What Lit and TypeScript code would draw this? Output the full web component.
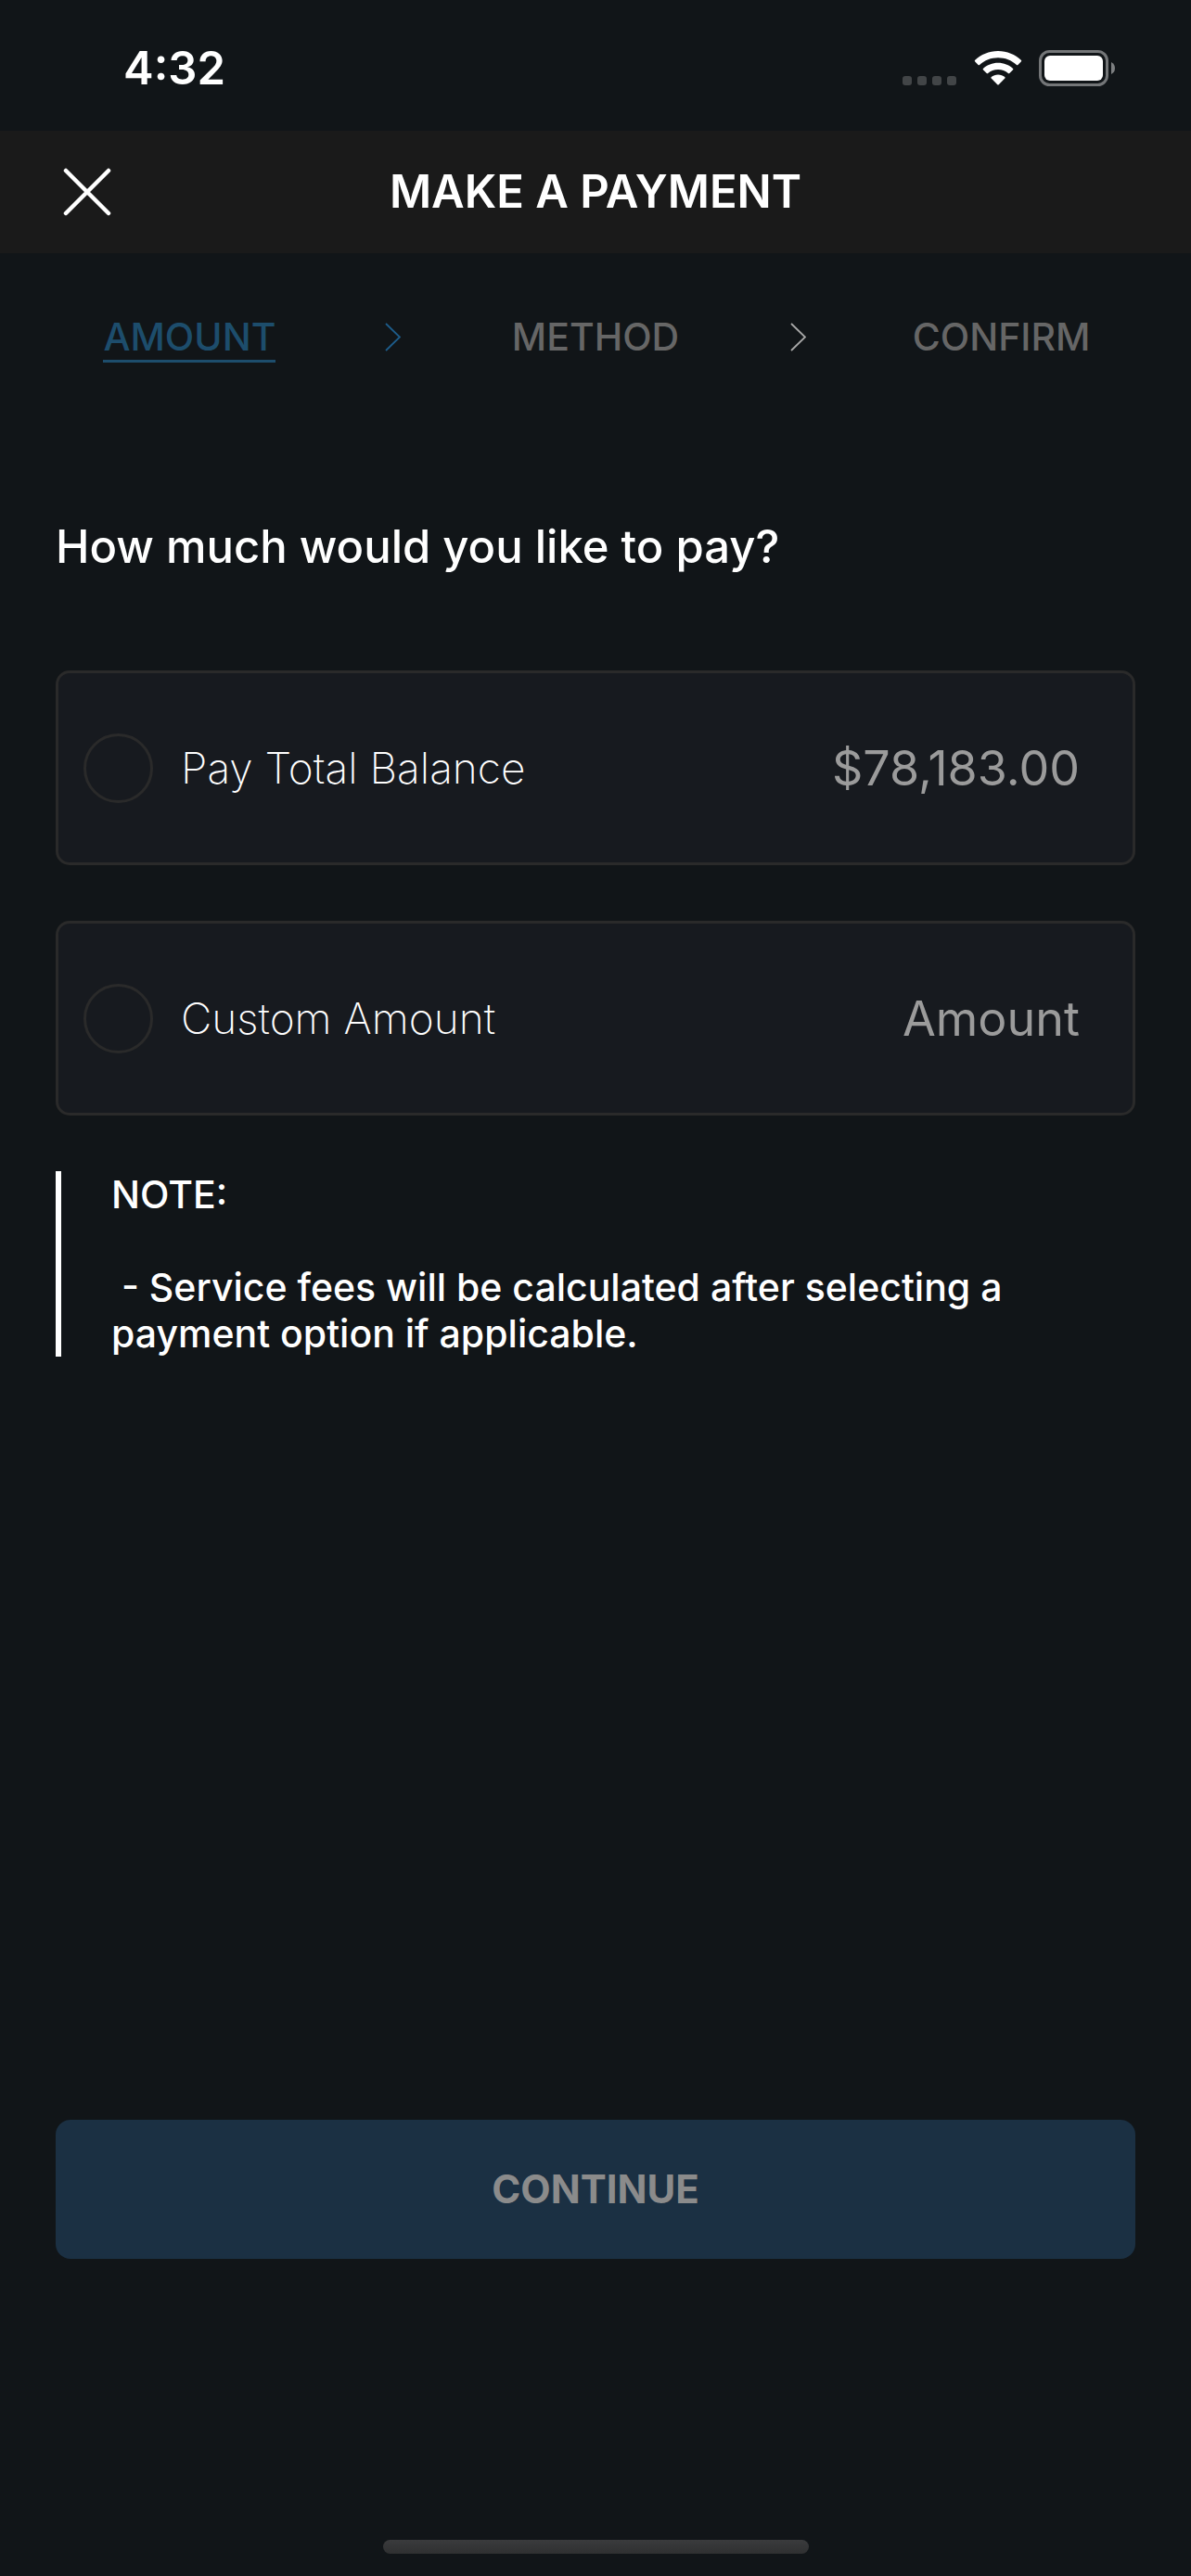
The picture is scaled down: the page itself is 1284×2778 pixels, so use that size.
import { LitElement, html, css, svg } from "lit";
import { customElement, state } from "lit/decorators.js";

type Choice = "" | "total" | "custom";

const STEPS = ["AMOUNT", "METHOD", "CONFIRM"];

@customElement("status-bar")
class StatusBar extends LitElement {
  static styles = css`
    :host {
      display: flex;
      align-items: center;
      justify-content: space-between;
      height: 141px;
      padding: 6px 82px 0 133px;
      box-sizing: border-box;
    }
    .time {
      font-size: 49px;
      line-height: 60px;
      font-weight: 600;
    }
    .icons {
      display: flex;
      align-items: flex-end;
    }
    .signal {
      width: 58px;
      height: 39px;
      margin-right: 19px;
    }
    .wifi {
      width: 52px;
      height: 39px;
      margin-right: 18px;
    }
    .battery {
      width: 82px;
      height: 39px;
    }
  `;

  render() {
    return html`
      <span class="time">4:32</span>
      <div class="icons">
        <svg class="signal" viewBox="0 0 58 39" aria-hidden="true" fill="#424547">
          ${[0, 16, 32, 48].map((x) => svg`<rect x=${x} y="28" width="10" height="10" rx="3" />`)}
        </svg>
        <svg class="wifi" viewBox="0 0 52 39" aria-hidden="true" fill="#fff">
          <path d="M26 1C35.600 1 44.500 4.700 51 11Q51.500 11.700 51 12.300L47.400 16Q46.700 16.600 46 16C40.500 11 33.500 8.300 26 8.300S11.500 11 6 16Q5.300 16.600 4.600 16L1 12.300Q.5 11.700 1 11C7.500 4.700 16.400 1 26 1Z" />
          <path d="M26 13.700C32.200 13.700 37.800 16 42.100 19.900Q42.700 20.500 42.100 21.200L38.300 25Q37.600 25.600 36.900 25C34 22.500 30.200 21 26 21S18 22.500 15.100 25Q14.400 25.600 13.700 25L9.900 21.200Q9.300 20.500 9.900 19.900C14.200 16 19.800 13.700 26 13.700Z" />
          <path d="M26 26.500C28.800 26.500 31.300 27.400 33.300 29.100Q33.900 29.800 33.300 30.500L26.700 37.200Q26 37.800 25.300 37.200L18.700 30.500Q18.100 29.800 18.700 29.100C20.700 27.400 23.200 26.500 26 26.500Z" />
        </svg>
        <svg class="battery" viewBox="0 0 82 39" aria-hidden="true">
          <rect x="1.500" y="1.500" width="72" height="36" rx="10" fill="none" stroke="#747678" stroke-width="3" />
          <rect x="6" y="6" width="63" height="27" rx="6" fill="#fff" />
          <path d="M78 13Q82 15 82 19.500T78 26Z" fill="#7d7f81" />
        </svg>
      </div>
    `;
  }
}

@customElement("step-trail")
class StepTrail extends LitElement {
  static styles = css`
    :host {
      display: block;
      padding: 65px 95px 0;
    }
    .trail {
      display: grid;
      grid-template-columns: repeat(5, 1fr);
      justify-items: center;
      align-items: start;
      margin: 0;
      padding: 0;
      list-style: none;
      color: #666;
      font-size: 41px;
      line-height: 50px;
      font-weight: 500;
    }
    .step {
      border-bottom: 3px solid transparent;
    }
    .current {
      color: #1d4d6c;
      border-color: #1d4d6c;
    }
    .divider {
      display: flex;
      align-items: center;
      height: 50px;
      color: #a8a8a8;
    }
    .passed {
      color: #1d5c8a;
    }
    .chevron {
      width: 17px;
      height: 31px;
    }
  `;

  render() {
    return html`
      <ol class="trail">
        ${STEPS.map(
          (name, i) => html`
            ${i > 0
              ? html`<li class="divider ${i === 1 ? "passed" : ""}" aria-hidden="true">
                  <svg class="chevron" viewBox="0 0 17 31" fill="none" stroke="currentColor" stroke-width="1.800">
                    <path d="M1 1L16 15.500L1 30" />
                  </svg>
                </li>`
              : ""}
            <li class="step ${i === 0 ? "current" : ""}">${name}</li>
          `
        )}
      </ol>
    `;
  }
}

@customElement("app-root")
class AppRoot extends LitElement {
  @state() private choice: Choice = "";

  static styles = css`
    :host {
      display: flex;
      flex-direction: column;
      min-height: 100vh;
      background: #111518;
      color: #fff;
      font-family: Inter, "Liberation Sans", sans-serif;
    }
    .header {
      display: grid;
      grid-template-columns: 75px 1fr 75px;
      align-items: center;
      height: 132px;
      padding: 0 56px;
      background: #1a1a1a;
    }
    .close {
      display: flex;
      justify-content: center;
      padding: 12px 0;
      border: 0;
      background: none;
      color: inherit;
    }
    .cross {
      width: 52px;
      height: 52px;
    }
    .title {
      margin: 0;
      text-align: center;
      font-size: 49px;
      line-height: 60px;
      font-weight: 600;
    }
    .content {
      display: flex;
      flex-direction: column;
      flex: 1;
      padding: 169px 60px 0;
    }
    .question {
      margin: 0 0 103px;
      font-size: 49px;
      line-height: 60px;
      font-weight: 500;
    }
    .options {
      display: grid;
      gap: 60px;
      margin-bottom: 60px;
    }
    .option {
      display: flex;
      align-items: center;
      gap: 30px;
      min-height: 210px;
      padding: 0 57px 0 27px;
      box-sizing: border-box;
      border: 3px solid #2a2a2a;
      border-radius: 15px;
      background: #171a1f;
    }
    .radio {
      appearance: none;
      flex: none;
      width: 75px;
      height: 75px;
      margin: 0;
      border: 3px solid #2a2a2a;
      border-radius: 50%;
    }
    .radio:checked {
      border-color: #1d5c8a;
      background: #1d5c8a;
    }
    .label {
      flex: 1;
      font-size: 46px;
      line-height: 60px;
      font-weight: 200;
    }
    .value {
      width: 400px;
      padding: 2px 0 0;
      border: 0;
      outline: 0;
      background: none;
      color: #9b9b9b;
      font-family: inherit;
      font-size: 52px;
      line-height: 60px;
      font-weight: 400;
      text-align: right;
    }
    .value::placeholder {
      color: #9b9b9b;
      opacity: 1;
    }
    .note {
      padding-left: 54px;
      border-left: 6px solid #fff;
      font-size: 41px;
      line-height: 50px;
      font-weight: 500;
    }
    .note-title {
      margin: 0 0 50px;
    }
    .note-text {
      margin: 0;
      white-space: pre-wrap;
    }
    .footer {
      display: flex;
      flex-direction: column;
      align-items: center;
      gap: 303px;
      padding: 0 60px 24px;
    }
    .continue {
      width: 100%;
      height: 150px;
      border: 0;
      border-radius: 16px;
      background: #1b3043;
      color: #8b8b8b;
      font-family: inherit;
      font-size: 42px;
      line-height: 50px;
      font-weight: 700;
    }
    .home {
      width: 459px;
      height: 15px;
      border-radius: 8px;
      background: linear-gradient(#3a3b3d, #2f3031);
    }
  `;

  private choose(choice: Choice) {
    this.choice = choice;
  }

  render() {
    return html`
      <status-bar></status-bar>
      <header class="header">
        <button class="close" aria-label="Close">
          <svg class="cross" viewBox="0 0 52 52" fill="none" stroke="#fff" stroke-width="4.500" stroke-linecap="round">
            <path d="M3 3L49 49M49 3L3 49" />
          </svg>
        </button>
        <h1 class="title">MAKE A PAYMENT</h1>
      </header>
      <step-trail></step-trail>
      <main class="content">
        <h2 class="question">How much would you like to pay?</h2>
        <div class="options">
          <div class="option">
            <input class="radio" type="radio" name="amount" id="total" @change=${() => this.choose("total")} />
            <label class="label" for="total">Pay Total Balance</label>
            <output class="value" for="total">$78,183.00</output>
          </div>
          <div class="option">
            <input class="radio" type="radio" name="amount" id="custom" @change=${() => this.choose("custom")} />
            <label class="label" for="custom">Custom Amount</label>
            <input class="value" type="text" inputmode="decimal" placeholder="Amount" aria-label="Amount" />
          </div>
        </div>
        <section class="note">
          <p class="note-title">NOTE:</p>
          <p class="note-text"> - Service fees will be calculated after selecting a payment option if applicable.</p>
        </section>
      </main>
      <footer class="footer">
        <button class="continue" ?disabled=${this.choice === ""}>CONTINUE</button>
        <div class="home"></div>
      </footer>
    `;
  }
}
